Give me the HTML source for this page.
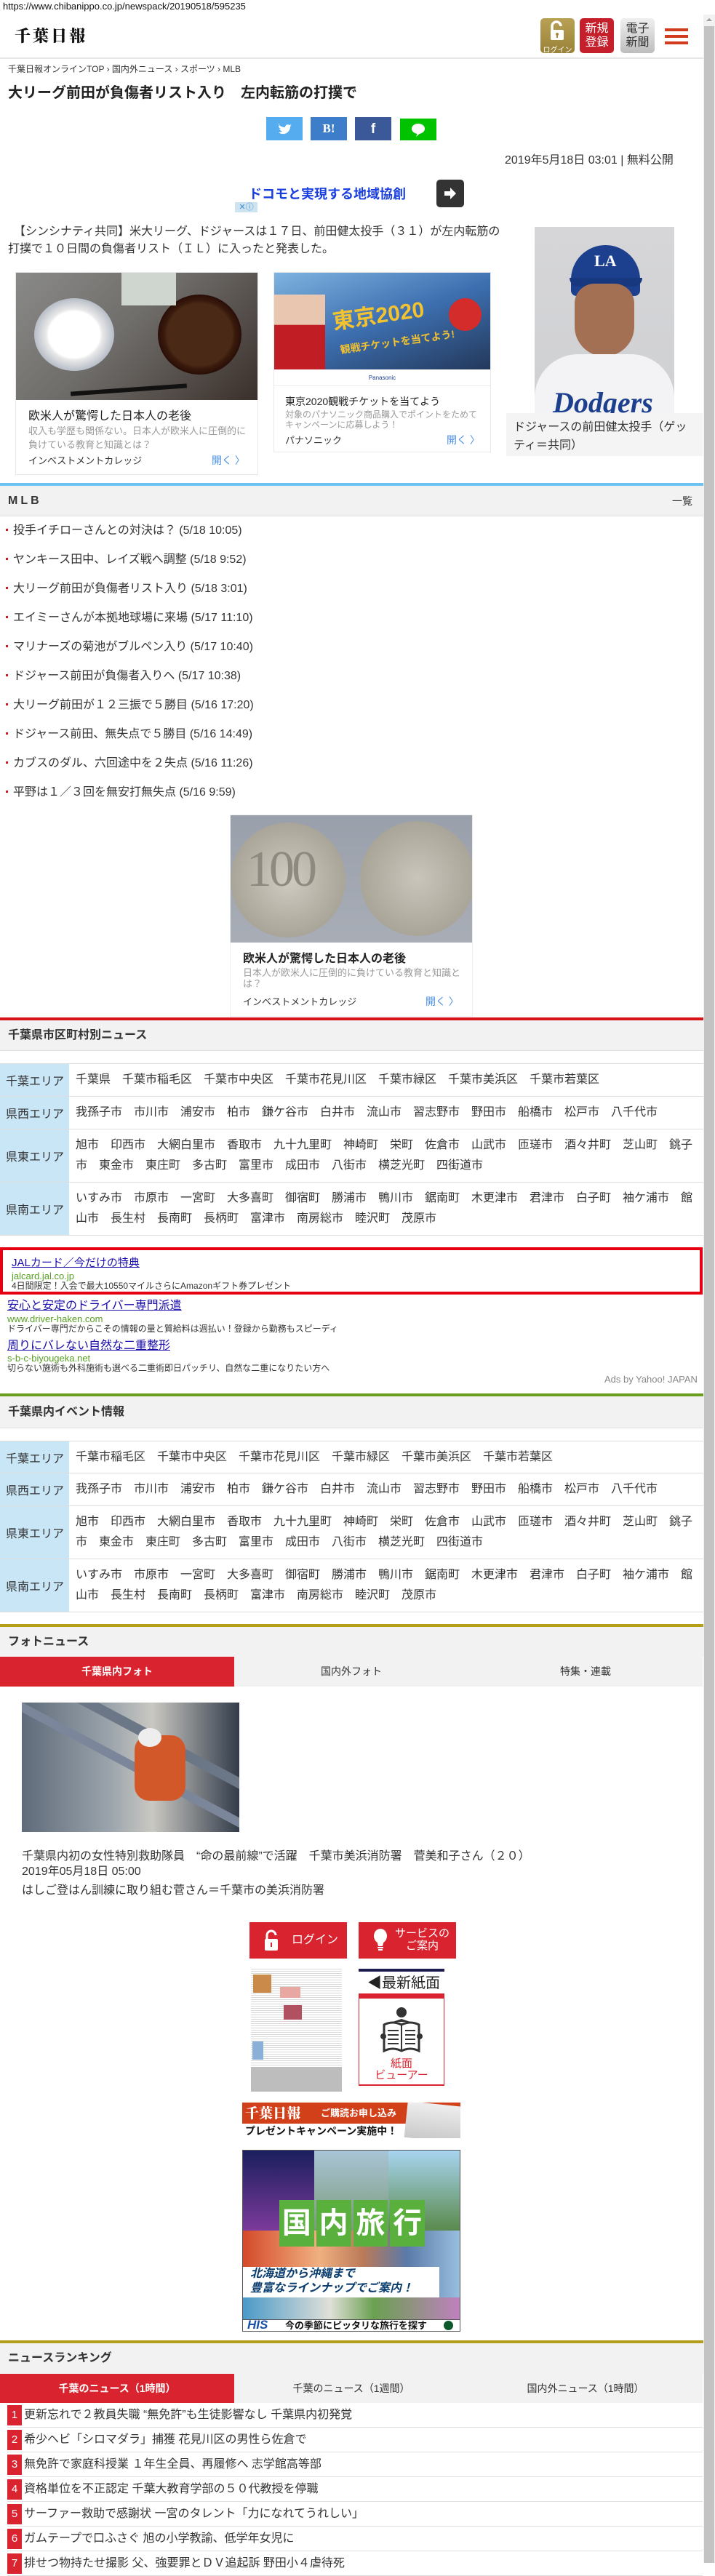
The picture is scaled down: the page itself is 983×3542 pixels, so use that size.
<!DOCTYPE html>
<html lang="ja"><head><meta charset="utf-8">
<style>
*{margin:0;padding:0;box-sizing:border-box}
body{width:983px;height:3524px;position:relative;background:#fff;font-family:"Liberation Sans","Noto Sans CJK JP",sans-serif;color:#333;overflow:hidden}
.a{position:absolute}
.t{white-space:nowrap;line-height:1}
.hd{position:absolute;left:0;width:967px;background:#f2f2f2;border-bottom:1px solid #e0e0e0}
.hd b{position:absolute;left:11px;font-size:16px;line-height:1;color:#333}
.tbl{position:absolute;left:0;width:967px;border-top:1px solid #ddd}
.row{display:flex;border-bottom:1px solid #ddd}
.row .l{width:95px;background:#c9e6f7;display:flex;align-items:center;padding-left:8px;font-size:16px;color:#333;white-space:nowrap}
.row .r{width:865px;padding:8px 0 8px 9px;font-size:16px;line-height:28px;color:#333}
.li{position:absolute;left:18px;font-size:16px;line-height:1;white-space:nowrap;color:#333}
.li:before{content:"";position:absolute;left:-10px;top:5px;width:3px;height:3px;background:#d7141a}
.rk{position:absolute;left:10px;width:956px;height:34px;border-bottom:1px solid #e0e0e0}
.rk i{position:absolute;left:0;top:3px;width:20px;height:28px;background:#d9232e;color:#fff;font-style:normal;font-size:15px;line-height:28px;text-align:center}
.rk span{position:absolute;left:23px;top:9px;font-size:16px;line-height:1;white-space:nowrap;color:#333}
</style></head><body>

<div class="a t" style="left:4px;top:2px;font-size:13px;color:#111">https://www.chibanippo.co.jp/newspack/20190518/595235</div>

<div class="a" style="left:967px;top:20px;width:16px;height:3504px;background:#f1f1f1"></div>
<div class="a" style="left:968px;top:36px;width:14px;height:3488px;background:#c3c3c3"></div>
<div class="a" style="left:971px;top:25px;width:0;height:0;border-left:4px solid transparent;border-right:4px solid transparent;border-bottom:4px solid #a0a0a0"></div>

<div class="a" style="left:0;top:79px;width:967px;height:2px;background:#e6e6e6"></div>
<div class="a t" style="left:20px;top:38px;font-family:'Noto Serif CJK SC','Liberation Serif',serif;font-weight:900;font-size:22px;letter-spacing:3px;color:#111">千葉日報</div>
<div class="a" style="left:743px;top:25px;width:47px;height:48px;border-radius:5px;background:linear-gradient(#b8a155,#9a8238)">
  <svg width="47" height="34" viewBox="0 0 47 34"><path d="M16 17v-6a6 6 0 0 1 12 0" stroke="#fff" stroke-width="3.5" fill="none"/><rect x="14" y="16" width="18" height="14" rx="2" fill="#fff"/><circle cx="23" cy="22" r="2" fill="#a48b40"/><rect x="22" y="22" width="2" height="5" fill="#a48b40"/></svg>
  <div class="t" style="text-align:center;font-size:10px;color:#fff;margin-top:1px">ログイン</div></div>
<div class="a" style="left:797px;top:25px;width:47px;height:48px;border-radius:5px;background:#c41f2a;color:#fff;font-size:16px;line-height:19px;text-align:center;padding-top:5px">新規<br>登録</div>
<div class="a" style="left:853px;top:25px;width:47px;height:48px;border-radius:5px;background:linear-gradient(#f0f0f0,#bdbdbd);color:#333;font-size:16px;line-height:19px;text-align:center;padding-top:5px">電子<br>新聞</div>
<div class="a" style="left:914px;top:39px;width:32px;height:4px;background:#d13b1e"></div>
<div class="a" style="left:914px;top:48px;width:32px;height:4px;background:#d13b1e"></div>
<div class="a" style="left:914px;top:57px;width:32px;height:4px;background:#d13b1e"></div>

<div class="a t" style="left:11px;top:89px;font-size:12px;color:#333">千葉日報オンラインTOP › 国内外ニュース › スポーツ › MLB</div>
<div class="a t" style="left:11px;top:118px;font-size:20px;font-weight:bold;color:#222">大リーグ前田が負傷者リスト入り　左内転筋の打撲で</div>

<div class="a" style="left:366px;top:161px;width:50px;height:32px;background:#55acee"><svg width="50" height="32"><path d="M18 11c2 2 5 3 8 3 0-3 3-5 6-3l2-1-1 2 2-1-2 2c0 6-5 11-11 10-2 0-4-1-5-2 2 0 4-1 5-2-2 0-3-1-4-3h2c-2-1-3-2-3-4l2 1c-2-1-2-3-1-5z" fill="#fff"/></svg></div>
<div class="a t" style="left:427px;top:161px;width:50px;height:32px;background:#3d7dca;color:#fff;font-weight:bold;font-size:17px;line-height:32px;text-align:center;font-family:'Liberation Serif',serif">B!</div>
<div class="a t" style="left:488px;top:161px;width:50px;height:32px;background:#3b5998;color:#fff;font-weight:bold;font-size:19px;line-height:34px;text-align:center">f</div>
<div class="a" style="left:550px;top:163px;width:50px;height:30px;background:#00c300"><svg width="50" height="30"><ellipse cx="25" cy="14" rx="9" ry="7" fill="#fff"/><path d="M24 20l-2 5 6-5z" fill="#fff"/></svg></div>

<div class="a t" style="left:694px;top:213px;font-size:16px;color:#333">2019年5月18日 03:01 | 無料公開</div>

<div class="a t" style="left:342px;top:258px;font-size:18px;font-weight:bold;color:#1a3fe0">ドコモと実現する地域協創</div>
<div class="a" style="left:600px;top:247px;width:38px;height:38px;border-radius:5px;background:#333"><svg width="38" height="38"><path d="M11 16h8v-5l8 8-8 8v-5h-8z" fill="#fff"/></svg></div>
<div class="a t" style="left:323px;top:278px;width:31px;height:14px;background:#cde3ef;color:#3b8fd0;font-size:11px;line-height:14px;text-align:center">✕ⓘ</div>

<div class="a" style="left:11px;top:307px;width:680px;font-size:16px;line-height:24px;color:#333">　【シンシナティ共同】米大リーグ、ドジャースは１７日、前田健太投手（３１）が左内転筋の打撲で１０日間の負傷者リスト（ＩＬ）に入ったと発表した。</div>

<div class="a" style="left:735px;top:312px;width:192px;height:256px;background:linear-gradient(#d6d6d8,#cfd0d3);overflow:hidden">
  <div class="a" style="left:50px;top:25px;width:95px;height:70px;border-radius:50px 50px 8px 8px;background:#1c3f8e"></div>
  <div class="a t" style="left:82px;top:36px;color:#fff;font-weight:bold;font-size:22px;font-family:'Liberation Serif',serif">LA</div>
  <div class="a" style="left:48px;top:70px;width:100px;height:12px;background:#17387f;border-radius:0 0 30px 30px"></div>
  <div class="a" style="left:55px;top:78px;width:82px;height:100px;border-radius:30px 30px 45px 45px;background:#a47054"></div>
  <div class="a" style="left:0;top:175px;width:192px;height:90px;border-radius:60px 60px 0 0;background:#f3f3f5"></div>
  <div class="a t" style="left:25px;top:222px;color:#1c3f8e;font-weight:bold;font-style:italic;font-size:40px;font-family:'Liberation Serif',serif">Dodgers</div>
</div>
<div class="a" style="left:696px;top:568px;width:270px;height:59px;background:#f4f4f4;padding:7px 10px;font-size:16px;line-height:25px;color:#333">ドジャースの前田健太投手（ゲッティ＝共同）</div>

<div class="a" style="left:21px;top:374px;width:334px;height:279px;border:1px solid #e8e8e8;overflow:hidden">
  <div style="height:175px;background:linear-gradient(135deg,#8a8a88,#6f6d6a 45%,#3b302b)">
    <div class="a" style="left:25px;top:35px;width:110px;height:100px;border-radius:50%;background:radial-gradient(#fff 45%,#e8e8e8 50%,#b8bec8 70%)"></div>
    <div class="a" style="left:195px;top:30px;width:115px;height:110px;border-radius:50%;background:radial-gradient(#4a2a16 55%,#3a1a0c 60%,#2a0f08 70%)"></div>
    <div class="a" style="left:145px;top:0;width:75px;height:45px;background:#cfd5cf"></div>
    <div class="a" style="left:75px;top:158px;width:160px;height:6px;background:#111;transform:rotate(-4deg)"></div>
  </div>
  <div class="a t" style="left:17px;top:190px;font-size:16px;color:#222">欧米人が驚愕した日本人の老後</div>
  <div class="a" style="left:17px;top:208px;width:300px;font-size:13px;line-height:19px;color:#999">収入も学歴も関係ない。日本人が欧米人に圧倒的に負けている教育と知識とは？</div>
  <div class="a t" style="left:17px;top:252px;font-size:13px;color:#333">インベストメントカレッジ</div>
  <div class="a t" style="left:269px;top:251px;font-size:14px;color:#4a90e2">開く 〉</div>
</div>
<div class="a" style="left:376px;top:374px;width:299px;height:248px;border:1px solid #e8e8e8;overflow:hidden">
  <div style="height:133px;background:linear-gradient(160deg,#7fb3e0,#3d6fb0 50%,#23385a)">
    <div class="a" style="left:0;top:30px;width:70px;height:103px;background:linear-gradient(#e8c6b0 40%,#c11d24 41%)"></div>
    <div class="a t" style="left:80px;top:45px;font-size:30px;font-weight:bold;color:#f2c230;transform:rotate(-8deg)">東京2020</div>
    <div class="a" style="left:240px;top:35px;width:45px;height:45px;border-radius:50%;background:#d42b2b"></div>
    <div class="a t" style="left:90px;top:88px;font-size:14px;font-weight:bold;color:#f2c230;transform:rotate(-8deg)">観戦チケットを当てよう!</div>
  </div>
  <div class="t" style="height:23px;border-bottom:1px solid #eee;text-align:center;font-size:8px;line-height:23px;color:#1b3f8f">Panasonic</div>
  <div class="a t" style="left:15px;top:170px;font-size:14px;color:#222">東京2020観戦チケットを当てよう</div>
  <div class="a" style="left:15px;top:188px;width:275px;font-size:12px;line-height:14px;color:#999">対象のパナソニック商品購入でポイントをためてキャンペーンに応募しよう！</div>
  <div class="a t" style="left:15px;top:224px;font-size:13px;color:#333">パナソニック</div>
  <div class="a t" style="left:237px;top:223px;font-size:14px;color:#4a90e2">開く 〉</div>
</div>

<div class="a" style="left:0;top:664px;width:967px;height:4px;background:#6cc3f0"></div>
<div class="hd" style="top:668px;height:42px"><b style="top:13px;letter-spacing:4px">MLB</b><span class="a t" style="left:924px;top:14px;font-size:14px">一覧</span></div>
<div class="li" style="top:722px">投手イチローさんとの対決は？ (5/18 10:05)</div>
<div class="li" style="top:762px">ヤンキース田中、レイズ戦へ調整 (5/18 9:52)</div>
<div class="li" style="top:802px">大リーグ前田が負傷者リスト入り (5/18 3:01)</div>
<div class="li" style="top:842px">エイミーさんが本拠地球場に来場 (5/17 11:10)</div>
<div class="li" style="top:882px">マリナーズの菊池がブルペン入り (5/17 10:40)</div>
<div class="li" style="top:922px">ドジャース前田が負傷者入りへ (5/17 10:38)</div>
<div class="li" style="top:962px">大リーグ前田が１２三振で５勝目 (5/16 17:20)</div>
<div class="li" style="top:1002px">ドジャース前田、無失点で５勝目 (5/16 14:49)</div>
<div class="li" style="top:1042px">カブスのダル、六回途中を２失点 (5/16 11:26)</div>
<div class="li" style="top:1082px">平野は１／３回を無安打無失点 (5/16 9:59)</div>

<div class="a" style="left:316px;top:1120px;width:334px;height:278px;border:1px solid #eee;overflow:hidden">
  <div style="height:175px;background:linear-gradient(#9aa0ab,#a8adb6)">
    <div class="a" style="left:0;top:10px;width:158px;height:158px;border-radius:50%;background:radial-gradient(#cfcbc0,#a9a599 70%,#8a867c)"></div>
    <div class="a t" style="left:22px;top:40px;font-size:70px;font-family:'Liberation Serif',serif;color:#8e8a80;letter-spacing:-4px">100</div>
    <div class="a" style="left:178px;top:8px;width:158px;height:158px;border-radius:50%;background:radial-gradient(#c9c5ba,#a9a599 70%,#8a867c)"></div>
  </div>
  <div class="a t" style="left:17px;top:190px;font-size:16px;font-weight:bold;color:#222">欧米人が驚愕した日本人の老後</div>
  <div class="a" style="left:17px;top:209px;width:300px;font-size:13px;line-height:15px;color:#999">日本人が欧米人に圧倒的に負けている教育と知識とは？</div>
  <div class="a t" style="left:17px;top:250px;font-size:13px;color:#333">インベストメントカレッジ</div>
  <div class="a t" style="left:268px;top:249px;font-size:14px;color:#4a90e2">開く 〉</div>
</div>

<div class="a" style="left:0;top:1399px;width:967px;height:4px;background:#d7141a"></div>
<div class="hd" style="top:1403px;height:42px"><b style="top:13px;font-weight:bold">千葉県市区町村別ニュース</b></div>
<div class="tbl" style="top:1462px">
 <div class="row" style="height:45px"><div class="l">千葉エリア</div><div class="r">千葉県　千葉市稲毛区　千葉市中央区　千葉市花見川区　千葉市緑区　千葉市美浜区　千葉市若葉区</div></div>
 <div class="row" style="height:45px"><div class="l">県西エリア</div><div class="r">我孫子市　市川市　浦安市　柏市　鎌ケ谷市　白井市　流山市　習志野市　野田市　船橋市　松戸市　八千代市</div></div>
 <div class="row" style="height:73px"><div class="l">県東エリア</div><div class="r">旭市　印西市　大網白里市　香取市　九十九里町　神崎町　栄町　佐倉市　山武市　匝瑳市　酒々井町　芝山町　銚子市　東金市　東庄町　多古町　富里市　成田市　八街市　横芝光町　四街道市</div></div>
 <div class="row" style="height:73px"><div class="l">県南エリア</div><div class="r">いすみ市　市原市　一宮町　大多喜町　御宿町　勝浦市　鴨川市　鋸南町　木更津市　君津市　白子町　袖ケ浦市　館山市　長生村　長南町　長柄町　富津市　南房総市　睦沢町　茂原市</div></div>
</div>

<div class="a" style="left:0;top:1715px;width:966px;height:65px;border:4px solid #e50012"></div>
<div class="a t" style="left:16px;top:1729px;font-size:15px;color:#1a0dab;text-decoration:underline">JALカード／今だけの特典</div>
<div class="a t" style="left:16px;top:1748px;font-size:13px;color:#58a023">jalcard.jal.co.jp</div>
<div class="a t" style="left:16px;top:1762px;font-size:12px;color:#333">4日間限定！入会で最大10550マイルさらにAmazonギフト券プレゼント</div>
<div class="a t" style="left:10px;top:1788px;font-size:16px;color:#1a0dab;text-decoration:underline">安心と安定のドライバー専門派遣</div>
<div class="a t" style="left:10px;top:1807px;font-size:13px;color:#58a023">www.driver-haken.com</div>
<div class="a t" style="left:10px;top:1821px;font-size:12px;color:#333">ドライバー専門だからこその情報の量と質給料は週払い！登録から勤務もスピーディ</div>
<div class="a t" style="left:10px;top:1843px;font-size:16px;color:#1a0dab;text-decoration:underline">周りにバレない自然な二重整形</div>
<div class="a t" style="left:10px;top:1861px;font-size:13px;color:#58a023">s-b-c-biyougeka.net</div>
<div class="a t" style="left:10px;top:1875px;font-size:12px;color:#333">切らない施術も外科施術も選べる二重術即日パッチリ、自然な二重になりたい方へ</div>
<div class="a t" style="left:831px;top:1890px;font-size:13px;color:#888">Ads by Yahoo! JAPAN</div>

<div class="a" style="left:0;top:1916px;width:967px;height:4px;background:#6a9e1f"></div>
<div class="hd" style="top:1920px;height:44px"><b style="top:14px;font-weight:bold">千葉県内イベント情報</b></div>
<div class="tbl" style="top:1981px">
 <div class="row" style="height:44px"><div class="l">千葉エリア</div><div class="r">千葉市稲毛区　千葉市中央区　千葉市花見川区　千葉市緑区　千葉市美浜区　千葉市若葉区</div></div>
 <div class="row" style="height:45px"><div class="l">県西エリア</div><div class="r">我孫子市　市川市　浦安市　柏市　鎌ケ谷市　白井市　流山市　習志野市　野田市　船橋市　松戸市　八千代市</div></div>
 <div class="row" style="height:73px"><div class="l">県東エリア</div><div class="r">旭市　印西市　大網白里市　香取市　九十九里町　神崎町　栄町　佐倉市　山武市　匝瑳市　酒々井町　芝山町　銚子市　東金市　東庄町　多古町　富里市　成田市　八街市　横芝光町　四街道市</div></div>
 <div class="row" style="height:73px"><div class="l">県南エリア</div><div class="r">いすみ市　市原市　一宮町　大多喜町　御宿町　勝浦市　鴨川市　鋸南町　木更津市　君津市　白子町　袖ケ浦市　館山市　長生村　長南町　長柄町　富津市　南房総市　睦沢町　茂原市</div></div>
</div>

<div class="a" style="left:0;top:2233px;width:967px;height:4px;background:#b49f1b"></div>
<div class="hd" style="top:2237px;height:41px;border-bottom:none"><b style="top:13px;font-weight:bold">フォトニュース</b></div>
<div class="a t" style="left:0;top:2278px;width:322px;height:41px;background:#d9232e;color:#fff;font-weight:bold;font-size:14px;line-height:41px;text-align:center">千葉県内フォト</div>
<div class="a t" style="left:322px;top:2278px;width:322px;height:41px;background:#f2f2f2;font-size:14px;line-height:41px;text-align:center">国内外フォト</div>
<div class="a t" style="left:644px;top:2278px;width:322px;height:41px;background:#f2f2f2;font-size:14px;line-height:41px;text-align:center">特集・連載</div>
<div class="a" style="left:30px;top:2341px;width:299px;height:178px;background:linear-gradient(90deg,#5f6b7a,#9aa3ab 40%,#c9c8c2 60%,#333c4a);overflow:hidden">
  <div class="a" style="left:-20px;top:30px;width:360px;height:14px;background:#6b7687;transform:rotate(28deg)"></div>
  <div class="a" style="left:-30px;top:80px;width:360px;height:12px;background:#7b869a;transform:rotate(28deg)"></div>
  <div class="a" style="left:155px;top:45px;width:70px;height:90px;background:#d2582a;border-radius:20px"></div>
  <div class="a" style="left:160px;top:35px;width:32px;height:26px;background:#eee;border-radius:50%"></div>
</div>
<div class="a t" style="left:30px;top:2545px;font-size:16px">千葉県内初の女性特別救助隊員　“命の最前線”で活躍　千葉市美浜消防署　菅美和子さん（２０）</div>
<div class="a t" style="left:30px;top:2566px;font-size:16px">2019年05月18日 05:00</div>
<div class="a t" style="left:30px;top:2592px;font-size:16px">はしご登はん訓練に取り組む菅さん＝千葉市の美浜消防署</div>

<div class="a" style="left:343px;top:2643px;width:134px;height:50px;background:#d9232e"><svg class="a" style="left:20px;top:10px" width="20" height="30"><path d="M4 13V8a6 6 0 0 1 12 0" stroke="#fff" stroke-width="3" fill="none"/><rect x="1" y="13" width="18" height="16" rx="2" fill="#fff"/><rect x="9" y="18" width="2" height="6" fill="#d9232e"/></svg><span class="a t" style="left:58px;top:17px;color:#fff;font-size:16px">ログイン</span></div>
<div class="a" style="left:493px;top:2643px;width:134px;height:50px;background:#d9232e"><svg class="a" style="left:20px;top:9px" width="20" height="34"><ellipse cx="10" cy="10" rx="9" ry="10" fill="#fff"/><path d="M5 16h10l-2 8H7z" fill="#fff"/><rect x="6" y="25" width="8" height="2" fill="#fff"/><rect x="7" y="28" width="6" height="2" fill="#fff"/></svg><span class="a" style="left:50px;top:7px;color:#fff;font-size:15px;line-height:17px;text-align:center;white-space:nowrap">サービスの<br>ご案内</span></div>
<div class="a" style="left:345px;top:2707px;width:125px;height:169px;background:#bdbdbd;overflow:hidden">
  <div style="height:135px;background:repeating-linear-gradient(0deg,#fff 0 2px,#d8d8d8 2px 3px)"></div>
  <div class="a" style="left:3px;top:8px;width:25px;height:25px;background:#c98a4a"></div>
  <div class="a" style="left:40px;top:25px;width:28px;height:15px;background:#e8a7a0"></div>
  <div class="a" style="left:45px;top:50px;width:25px;height:20px;background:#b05060"></div>
  <div class="a" style="left:2px;top:100px;width:15px;height:25px;background:#8ab0d8"></div>
</div>
<div class="a" style="left:493px;top:2707px;width:118px;height:4px;background:#1d1b4f"></div>
<div class="a t" style="left:505px;top:2717px;font-size:20px;color:#222">◀最新紙面</div>
<div class="a" style="left:493px;top:2741px;width:118px;height:7px;background:#d9232e"></div>
<div class="a" style="left:493px;top:2748px;width:118px;height:120px;border:1px solid #d9232e;border-top:none;border-bottom-width:2px">
  <svg class="a" style="left:28px;top:10px" width="60" height="70" viewBox="0 0 60 70"><circle cx="30" cy="9" r="7" fill="#333"/><path d="M18 22l12-4 12 4z" fill="#333"/><path d="M6 26q12-6 24 0q12-6 24 0v36q-12-6-24 0q-12-6-24 0z" fill="#fff" stroke="#333" stroke-width="3"/><path d="M30 26v36" stroke="#333" stroke-width="2"/><circle cx="5" cy="42" r="4" fill="#333"/><circle cx="55" cy="42" r="4" fill="#333"/><path d="M11 34h15M11 40h15M11 46h15M11 52h15M35 34h14M35 40h14M35 46h14M35 52h14" stroke="#333" stroke-width="2"/></svg>
  <div class="a" style="left:0;top:82px;width:116px;text-align:center;color:#d9232e;font-size:15px;line-height:16px">紙面<br>ビューアー</div>
</div>

<div class="a" style="left:333px;top:2891px;width:300px;height:49px;background:#fff;overflow:hidden">
  <div style="height:29px;background:#d2401a"></div>
  <div class="a t" style="left:4px;top:4px;color:#fff;font-weight:900;font-size:19px;font-family:'Noto Serif CJK SC',serif">千葉日報</div>
  <div class="a t" style="left:108px;top:8px;color:#fff;font-weight:bold;font-size:13px">ご購読お申し込み</div>
  <div class="a t" style="left:4px;top:32px;color:#111;font-weight:bold;font-size:14px">プレゼントキャンペーン実施中！</div>
  <div class="a" style="left:225px;top:2px;width:80px;height:50px;background:linear-gradient(#eee,#c9c9c9);transform:rotate(6deg)"></div>
</div>

<div class="a" style="left:333px;top:2956px;width:300px;height:250px;border:1px solid #555;overflow:hidden;background:#fff">
  <div class="a" style="left:0;top:0;width:98px;height:110px;background:linear-gradient(#1b1f5e,#7b3a9a)"></div>
  <div class="a" style="left:98px;top:0;width:102px;height:110px;background:linear-gradient(#a9c4d6,#7c9a7a)"></div>
  <div class="a" style="left:200px;top:0;width:100px;height:110px;background:linear-gradient(#a8d4f0,#5a8a4c)"></div>
  <div class="a" style="left:0;top:110px;width:300px;height:92px;background:linear-gradient(90deg,#d44a2a,#f0b080 35%,#bb7a58 55%,#5a7aa8 75%,#9ac0e0)"></div>
  <div class="a" style="left:50px;top:68px;width:200px;height:64px;display:flex;gap:3px">
    <div style="flex:1;background:#5ab03c;color:#fff;font-weight:bold;font-size:40px;line-height:64px;text-align:center">国</div>
    <div style="flex:1;background:#5ab03c;color:#fff;font-weight:bold;font-size:40px;line-height:64px;text-align:center">内</div>
    <div style="flex:1;background:#5ab03c;color:#fff;font-weight:bold;font-size:40px;line-height:64px;text-align:center">旅</div>
    <div style="flex:1;background:#5ab03c;color:#fff;font-weight:bold;font-size:40px;line-height:64px;text-align:center">行</div>
  </div>
  <div class="a" style="left:0;top:160px;width:270px;height:42px;background:#fff"></div>
  <div class="a" style="left:10px;top:160px;font-size:16px;line-height:20px;font-weight:bold;font-style:italic;color:#0a3d6e;white-space:nowrap">北海道から沖縄まで<br>豊富なラインナップでご案内！</div>
  <div class="a" style="left:0;top:202px;width:300px;height:30px;background:linear-gradient(90deg,#4a9ac8,#e0e0d8 40%,#6aa050 60%,#c080c0)"></div>
  <div class="a" style="left:0;top:232px;width:300px;height:18px;background:#fff;border-top:1px solid #555"></div>
  <div class="a t" style="left:6px;top:231px;font-size:17px;font-weight:900;font-style:italic;color:#1a4fa8">HIS</div>
  <div class="a t" style="left:58px;top:234px;font-size:13px;font-weight:bold;color:#111">今の季節にピッタリな旅行を探す</div>
  <div class="a" style="left:276px;top:234px;width:13px;height:13px;border-radius:50%;background:#0c5a2a"></div>
</div>

<div class="a" style="left:0;top:3218px;width:967px;height:4px;background:#b49f1b"></div>
<div class="hd" style="top:3222px;height:42px;border-bottom:none"><b style="top:13px;font-weight:bold">ニュースランキング</b></div>
<div class="a t" style="left:0;top:3264px;width:322px;height:40px;background:#d9232e;color:#fff;font-weight:bold;font-size:14px;line-height:40px;text-align:center">千葉のニュース（1時間）</div>
<div class="a t" style="left:322px;top:3264px;width:322px;height:40px;background:#f2f2f2;font-size:14px;line-height:40px;text-align:center">千葉のニュース（1週間）</div>
<div class="a t" style="left:644px;top:3264px;width:322px;height:40px;background:#f2f2f2;font-size:14px;line-height:40px;text-align:center">国内外ニュース（1時間）</div>
<div class="rk" style="top:3304px"><i>1</i><span>更新忘れで２教員失職 “無免許”も生徒影響なし 千葉県内初発覚</span></div>
<div class="rk" style="top:3338px"><i>2</i><span>希少ヘビ「シロマダラ」捕獲 花見川区の男性ら佐倉で</span></div>
<div class="rk" style="top:3372px"><i>3</i><span>無免許で家庭科授業 １年生全員、再履修へ 志学館高等部</span></div>
<div class="rk" style="top:3406px"><i>4</i><span>資格単位を不正認定 千葉大教育学部の５０代教授を停職</span></div>
<div class="rk" style="top:3440px"><i>5</i><span>サーファー救助で感謝状 一宮のタレント「力になれてうれしい」</span></div>
<div class="rk" style="top:3474px"><i>6</i><span>ガムテープで口ふさぐ 旭の小学教諭、低学年女児に</span></div>
<div class="rk" style="top:3508px"><i>7</i><span>排せつ物持たせ撮影 父、強要罪とＤＶ追起訴 野田小４虐待死</span></div>

</body></html>
